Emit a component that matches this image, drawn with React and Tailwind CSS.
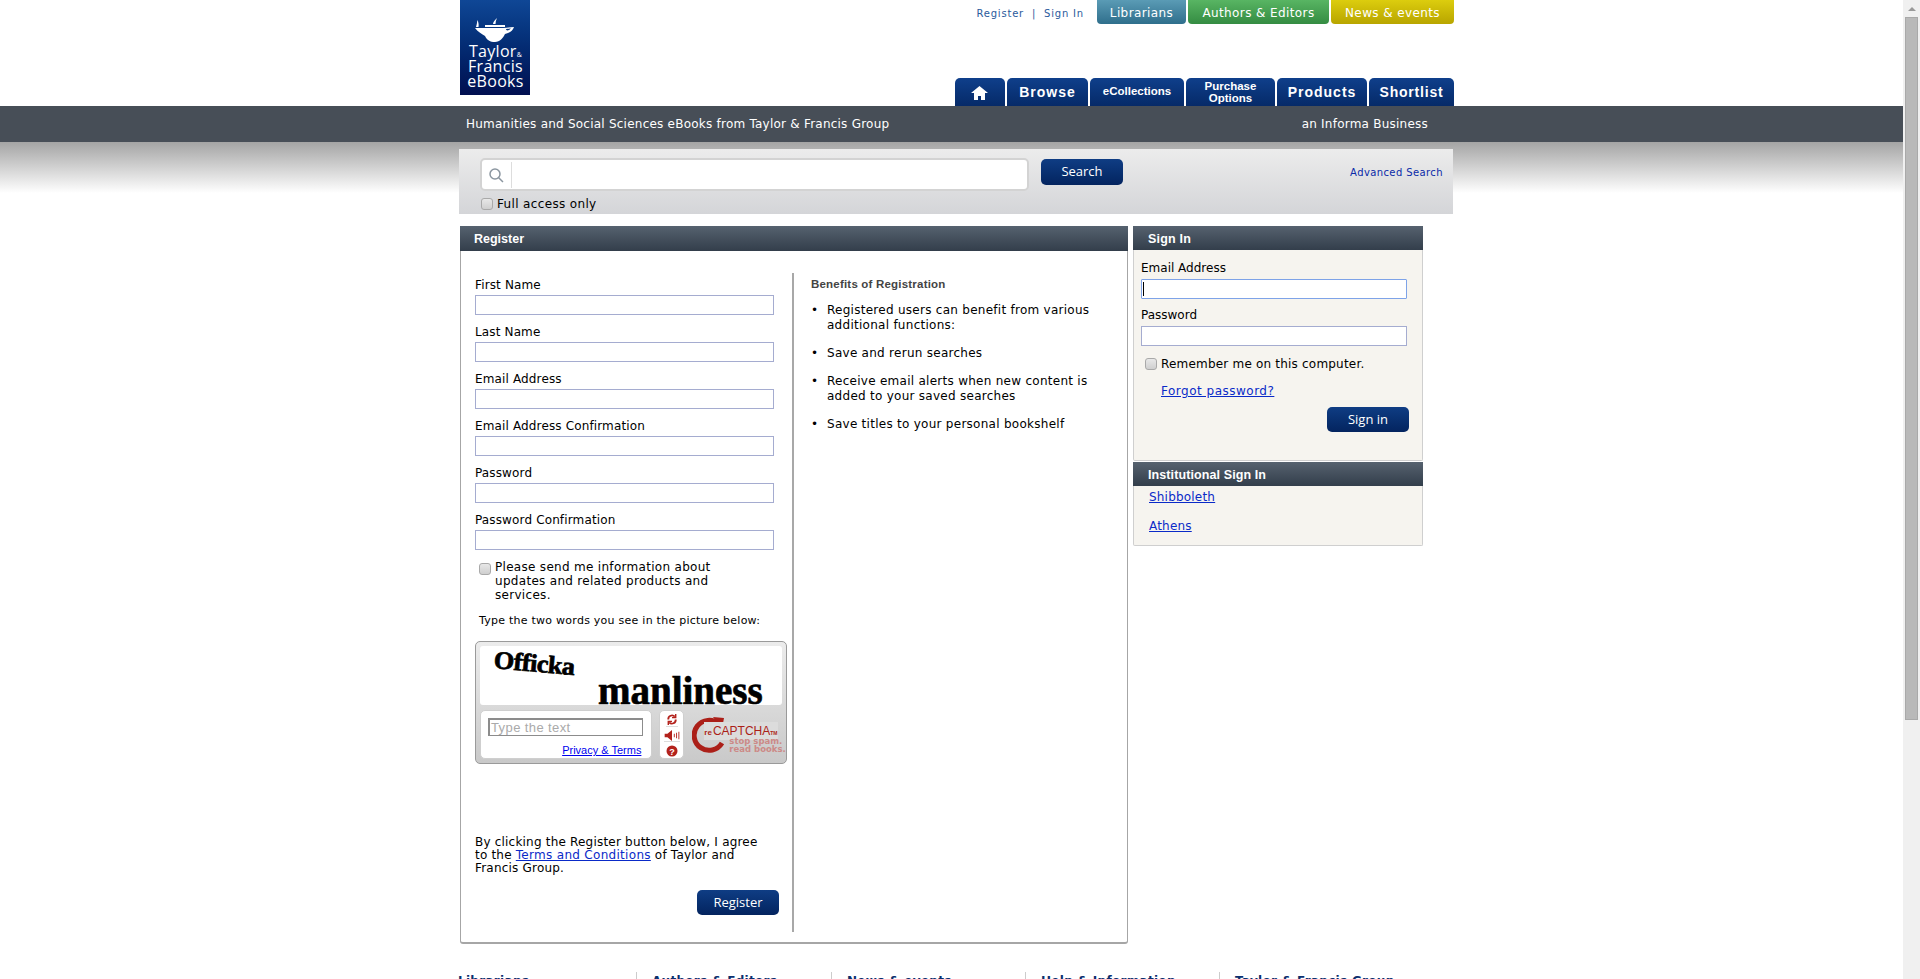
import { Fragment } from "react";

const sans = "font-['DejaVu_Sans',Verdana,sans-serif]";
const navyBtn =
  "rounded-[5px] bg-gradient-to-b from-[#0f3d84] to-[#04245f] text-white font-['Open_Sans',sans-serif] font-medium text-[13px] flex items-center justify-center";
const panelHead =
  "flex items-center pt-[2px] bg-gradient-to-b from-[#56626f] to-[#333e4b] text-white font-['Liberation_Sans',sans-serif] font-bold text-[12.500px]";

const topLinks = [
  { label: "Librarians", w: "w-[89px]", cls: "from-[#5a9bb5] to-[#2f6f8c]" },
  { label: "Authors & Editors", w: "w-[141px]", cls: "from-[#58b563] to-[#348c42]" },
  { label: "News & events", w: "w-[123px]", cls: "from-[#dccd0e] to-[#b8a500]" },
];

const tabs = [
  { label: "Browse", w: "w-[81px]", cls: "text-[14px] tracking-[1px]" },
  { label: "eCollections", w: "w-[94px]", cls: "text-[11.500px]" },
  { label: "Purchase Options", w: "w-[89px]", cls: "text-[11.500px] leading-[12px] px-5" },
  { label: "Products", w: "w-[90px]", cls: "text-[14px] tracking-[1px]" },
  { label: "Shortlist", w: "w-[85px]", cls: "text-[14px] tracking-[0.8px]" },
];

const regFields = [
  "First Name",
  "Last Name",
  "Email Address",
  "Email Address Confirmation",
  "Password",
  "Password Confirmation",
];

const benefits = [
  "Registered users can benefit from various additional functions:",
  "Save and rerun searches",
  "Receive email alerts when new content is added to your saved searches",
  "Save titles to your personal bookshelf",
];

const footerCols = [
  { label: "Librarians", w: "w-[178px]", first: true },
  { label: "Authors & Editors", w: "w-[195px]" },
  { label: "News & events", w: "w-[194px]" },
  { label: "Help & Information", w: "w-[194px]" },
  { label: "Taylor & Francis Group", w: "w-[220px]" },
];

const Check = ({ className = "" }) => (
  <input
    type="checkbox"
    className={`appearance-none w-[12px] h-[12px] shrink-0 rounded-[3px] border border-[#a9a9a9] bg-gradient-to-b from-[#e8e8e8] to-[#cfcfcf] ${className}`}
  />
);

const TextField = ({ className = "" }) => (
  <input className={`block h-[20px] border border-[#a5acd0] bg-white outline-none ${className}`} />
);

const Logo = () => (
  <div className="w-[70px] h-[95px] bg-gradient-to-b from-[#0f4796] to-[#010f50] text-white flex flex-col items-center pt-[18px]">
    <svg width="42" height="24" viewBox="0 0 42 24" fill="white">
      <path d="M2 9c1-3 1-5 1.500-7 .8 2 1.500 4 1 7z" />
      <path d="M19 6c0-2 2-4 4-6-1 2-1.500 4-1.500 6z" />
      <path d="M11 7h20v2H11z" />
      <path d="M1 10h28c4 0 7-1 11-1-1 3-3 5-6 6l-3 1c-2 4-5 8-10 8-5 0-8-2-10-6C8 16 4 14 1 10zm31 1c0 1 1 2 3 1l2-1.500z" fillRule="evenodd" />
    </svg>
    <div className="font-['Open_Sans',sans-serif] text-[16px] leading-[15px] mt-[2px] text-center w-full pl-[1px] tracking-[0.3px]">
      Taylor<span className="text-[7px] leading-none">&amp;</span>
      <br />
      Francis
      <br />
      eBooks
    </div>
  </div>
);

const Captcha = () => (
  <div className="mt-[13px] w-[312px] h-[123px] rounded-[5px] border border-[#9a9a9a] bg-gradient-to-b from-[#ececec] to-[#c9c9c9] px-[4px] pt-[4px]">
    <div className="h-[59px] bg-white rounded-[3px] relative font-['Liberation_Serif',serif] font-bold text-black">
      <span className="absolute left-[14px] top-[-5px] text-[25px] tracking-[-0.5px] origin-left rotate-[5deg] scale-x-[1.05] [-webkit-text-stroke:0.7px_black]">
        Officka
      </span>
      <span className="absolute left-[118px] top-[25px] text-[39px] leading-[40px] [-webkit-text-stroke:0.7px_black]">
        manliness
      </span>
    </div>
    <div className="flex mt-[5px]">
      <div className="w-[173px] h-[49px] bg-white rounded-[5px] border border-[#cfcfcf] pl-[7px] pt-[7px]">
        <div className="w-[155px] h-[18px] border-2 border-[#8c8c8c] border-r-1 border-b-1 text-[#aaa] font-['Liberation_Sans',sans-serif] text-[13px] leading-[15px] tracking-[0.4px] pl-[1px]">
          Type the text
        </div>
        <div className="text-right pr-[10px] mt-[8px] text-[11px] leading-[12px] font-['Liberation_Sans',sans-serif] text-[#0000ee] underline">
          Privacy &amp; Terms
        </div>
      </div>
      <div className="ml-[7px] w-[25px] h-[49px] bg-white rounded-[5px] border border-[#cfcfcf] flex flex-col items-center justify-around divide-y divide-[#ddd]">
        <svg width="12" height="14" viewBox="0 0 12 14" fill="none" stroke="#b3221c" strokeWidth="2">
          <path d="M2 7a4 4 0 0 1 7-3M10 7a4 4 0 0 1-7 3" />
          <path d="M10 1v4H6M2 13V9h4" strokeWidth="1.500" />
        </svg>
        <svg width="16" height="12" viewBox="0 0 16 12" fill="#b3221c">
          <path d="M0 4h3l5-4v12L3 8H0z" />
          <path d="M10 4h1v4h-1zM12.500 3h1v6h-1zM15 2h1v8h-1z" />
        </svg>
        <svg width="12" height="12" viewBox="0 0 12 12">
          <circle cx="6" cy="6" r="5.500" fill="#b3221c" />
          <text x="6" y="9.500" textAnchor="middle" fontSize="9" fontWeight="700" fill="white" fontFamily="Liberation Sans">?</text>
        </svg>
      </div>
      <div className="ml-[8px] relative w-[90px] h-[48px]">
        <svg width="36" height="38" viewBox="0 0 36 38" className="absolute left-0 top-[5px]" fill="none">
          <path d="M30 28a15 15 0 1 1-3-19" stroke="#ab1f18" strokeWidth="5" />
          <path d="M21 2l11 1-2 11z" fill="#ab1f18" />
        </svg>
        <div className="absolute left-[12px] top-[12px] flex items-baseline font-['Liberation_Sans',sans-serif] text-[#ab1f18] font-bold bg-[#dcdcdc] pr-[1px]">
          <span className="text-[8px] mr-[1px]">re</span>
          <span className="text-[12px] font-normal">CAPTCHA</span>
          <span className="text-[5px]">TM</span>
        </div>
        <div className="absolute left-[37px] top-[27px] text-[8.500px] leading-[8px] font-['DejaVu_Sans',sans-serif] text-[#cc8a87] font-bold whitespace-nowrap">
          stop spam.
          <br />
          read books.
        </div>
      </div>
    </div>
  </div>
);

const App = () => {
  return (
    <div className={`h-[979px] overflow-hidden flex bg-white text-black text-[12px] ${sans}`}>
      <div className="flex-1 min-w-0">
        {/* Header */}
        <header className="h-[106px] ml-[460px] w-[994px] flex justify-between">
          <Logo />
          <div className="flex flex-col items-end">
            <div className="flex items-start h-[78px]">
              <div className="text-[10px] tracking-[0.8px] text-[#2a5a9c] mt-[6px] mr-[13px] whitespace-pre">
                Register  |  Sign In
              </div>
              <div className="flex gap-[2px]">
                {topLinks.map((l) => (
                  <div
                    key={l.label}
                    className={`${l.w} h-[24px] pt-[1px] rounded-b-[4px] bg-gradient-to-b ${l.cls} text-white text-[12px] tracking-[0.4px] flex items-center justify-center`}
                  >
                    {l.label}
                  </div>
                ))}
              </div>
            </div>
            <nav className="flex gap-[2px] font-['Liberation_Sans',sans-serif]">
              <div className="w-[50px] h-[28px] pr-[2px] rounded-t-[5px] bg-gradient-to-b from-[#0f3f8b] to-[#062a68] flex items-center justify-center">
                <svg width="17" height="15" viewBox="0 0 17 15" fill="white">
                  <path d="M8.500 1L0 8h3v7h4v-4h3v4h4V8h3z" />
                </svg>
              </div>
              {tabs.map((t) => (
                <div
                  key={t.label}
                  className={`${t.w} h-[28px] rounded-t-[5px] bg-gradient-to-b from-[#0f3f8b] to-[#062a68] text-white font-bold flex items-center justify-center text-center ${t.cls}`}
                >
                  {t.label}
                </div>
              ))}
            </nav>
          </div>
        </header>

        {/* Grey strip */}
        <div className="h-[36px] bg-[#474e57] text-white text-[12px] tracking-[0.23px]">
          <div className="ml-[466px] w-[962px] h-full flex items-center justify-between">
            <span>Humanities and Social Sciences eBooks from Taylor &amp; Francis Group</span>
            <span>an Informa Business</span>
          </div>
        </div>

        {/* Search band */}
        <div className="pt-[7px] bg-[linear-gradient(to_bottom,#a4a4a4,#ffffff)] bg-no-repeat bg-[length:100%_51px]">
          <div className="ml-[459px] w-[994px] h-[65px] bg-gradient-to-b from-[#ececec] to-[#d4d5d8] relative pl-[21px] pt-[9px]">
            <div className="flex items-start">
              <div className="w-[549px] h-[33px] bg-white rounded-[5px] border-2 border-[#d3d3d3] flex items-center">
                <svg width="16" height="16" viewBox="0 0 16 16" fill="none" stroke="#8b96a0" strokeWidth="1.500" className="ml-[6px]">
                  <circle cx="7" cy="7" r="5" />
                  <path d="M10.500 10.500L15 15" />
                </svg>
                <div className="ml-[7px] w-px h-[26px] bg-[#ddd]" />
              </div>
              <button className={`ml-[12px] mt-[1px] w-[82px] h-[26px] ${navyBtn}`}>Search</button>
              <a className="absolute right-[10px] top-[16px] text-[10px] tracking-[0.4px] text-[#0a2aa8]">Advanced Search</a>
            </div>
            <div className="flex items-center mt-[4px] ml-[1px]">
              <Check />
              <span className="ml-[4px] tracking-[0.35px]">Full access only</span>
            </div>
          </div>
        </div>

        {/* Main columns */}
        <main className="ml-[460px] mt-[12px] flex items-start">
          <section className="w-[668px] h-[718px]">
            <div className={`${panelHead} pl-[14px] h-[25px]`}>Register</div>
            <div className="h-[693px] rounded-b-[3px] border border-t-0 border-[#a6a6a6] border-b-2 flex pt-[22px]">
              <div className="w-[333px] h-[659px] border-r-2 border-[#a8a8a8] pl-[14px] pt-[5px]">
                <div className="w-[300px]">
                  {regFields.map((f) => (
                    <Fragment key={f}>
                      <label className="block h-[14px] leading-[14px] mb-[3px] mt-[10px] first:mt-0 tracking-[0.14px]">{f}</label>
                      <TextField className="w-[299px]" />
                    </Fragment>
                  ))}
                  <div className="flex mt-[10px] ml-[4px] leading-[14px] tracking-[0.3px]">
                    <Check className="mt-[3px]" />
                    <p className="ml-[4px] w-[240px]">Please send me information about updates and related products and services.</p>
                  </div>
                  <p className="mt-[12px] ml-[4px] text-[11px] leading-[14px] tracking-[0.25px] whitespace-nowrap">
                    Type the two words you see in the picture below:
                  </p>
                </div>
                <Captcha />
                <p className="mt-[72px] w-[290px] leading-[13px] tracking-[0.2px]">
                  By clicking the Register button below, I agree to the{" "}
                  <a className="text-[#0a2ac8] underline tracking-[0.3px]">Terms and Conditions</a> of Taylor and Francis Group.
                </p>
                <div className="flex justify-end pr-[13px] mt-[15px]">
                  <button className={`w-[82px] h-[25px] ${navyBtn}`}>Register</button>
                </div>
              </div>
              <div className="pl-[17px] w-[320px] tracking-[0.27px]">
                <h3 className="font-['Liberation_Sans',sans-serif] font-bold text-[11.500px] leading-[14px] text-[#444] tracking-[0.2px] mt-[4px]">
                  Benefits of Registration
                </h3>
                <ul className="mt-[12px] space-y-[13px]">
                  {benefits.map((b) => (
                    <li key={b} className="flex leading-[15px]">
                      <span className="w-[16px] shrink-0 text-[12px]">•</span>
                      <span className="w-[290px]">{b}</span>
                    </li>
                  ))}
                </ul>
              </div>
            </div>
          </section>

          <aside className="ml-[5px] w-[290px]">
            <div className={`${panelHead} pl-[15px] h-[24px] tracking-[0.2px]`}>Sign In</div>
            <div className="h-[211px] bg-[#f6f4ef] border border-t-0 border-[#cfcfcf] rounded-b-[2px] pl-[7px] pt-[11px]">
              <label className="block leading-[14px] mb-[4px]">Email Address</label>
              <div className="w-[266px] h-[20px] bg-white border border-[#7ea3e8] rounded-[1px] flex items-center pl-[1px]">
                <span className="w-px h-[14px] bg-black" />
              </div>
              <label className="block leading-[14px] mt-[9px] mb-[4px]">Password</label>
              <TextField className="w-[266px]" />
              <div className="flex items-center mt-[9px] ml-[4px]">
                <Check />
                <span className="ml-[4px] tracking-[0.2px]">Remember me on this computer.</span>
              </div>
              <a className="block ml-[20px] mt-[9px] text-[#0a2ac8] underline tracking-[0.5px]">Forgot password?</a>
              <div className="flex justify-end pr-[13px] mt-[7px]">
                <button className={`w-[82px] h-[25px] ${navyBtn}`}>Sign in</button>
              </div>
            </div>
            <div className={`${panelHead} pl-[15px] mt-[1px] h-[24px] tracking-[0.1px]`}>Institutional Sign In</div>
            <div className="h-[60px] bg-[#f6f4ef] border border-t-0 border-[#cfcfcf] rounded-b-[2px] pl-[15px] pt-[4px] tracking-[0.2px]">
              <a className="block leading-[14px] text-[#0a2ac8] underline">Shibboleth</a>
              <a className="block leading-[14px] mt-[15px] text-[#0a2ac8] underline">Athens</a>
            </div>
          </aside>
        </main>

        {/* Footer, cut off by the fold */}
        <footer className="ml-[458px] mt-[28px] flex">
          {footerCols.map((c) => (
            <div key={c.label} className={`${c.w} ${c.first ? "" : "border-l border-[#ccc] pl-[15px]"} text-[#0b2f6e] font-bold text-[12px] leading-[14px] tracking-[0.3px] pt-[2px]`}>
              {c.label}
            </div>
          ))}
        </footer>
      </div>

      {/* Window scrollbar */}
      <div className="w-[17px] shrink-0 bg-[#f0f0f0] flex flex-col items-center">
        <div className="h-[17px] w-full flex items-center justify-center">
          <div className="w-0 h-0 border-l-[4px] border-r-[4px] border-b-[4px] border-l-transparent border-r-transparent border-b-[#999]" />
        </div>
        <div className="w-[13px] h-[703px] bg-[#b9b9b9] border border-[#a9a9a9]" />
      </div>
    </div>
  );
};

export default App;
